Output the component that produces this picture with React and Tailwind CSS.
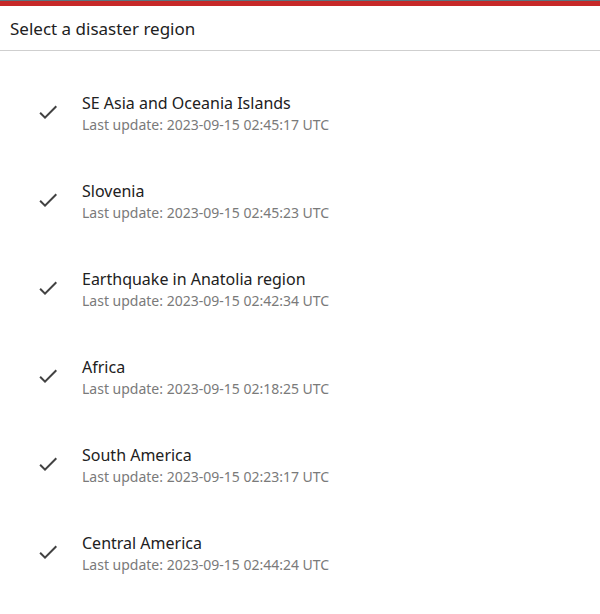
const regions = [
  { name: 'SE Asia and Oceania Islands', updated: '2023-09-15 02:45:17 UTC' },
  { name: 'Slovenia', updated: '2023-09-15 02:45:23 UTC' },
  { name: 'Earthquake in Anatolia region', updated: '2023-09-15 02:42:34 UTC' },
  { name: 'Africa', updated: '2023-09-15 02:18:25 UTC' },
  { name: 'South America', updated: '2023-09-15 02:23:17 UTC' },
  { name: 'Central America', updated: '2023-09-15 02:44:24 UTC' },
]

function CheckIcon() {
  return (
    <svg width="24" height="24" viewBox="0 0 24 24" className="fill-[#424242] shrink-0 mb-[4px]">
      <path d="M9 16.17L4.83 12l-1.42 1.41L9 19 21 7l-1.41-1.41z" />
    </svg>
  )
}

export default function App() {
  return (
    <div className="w-[600px] h-[614px] bg-white overflow-hidden font-['Noto_Sans',sans-serif]">
      <div className="h-px bg-[#5b7680]" />
      <div className="h-[5px] bg-[#c62828]" />
      <div className="h-[45px] flex items-center px-[10px] pt-px border-b border-[#cfcfcf] text-[17px] text-[#212121]">
        Select a disaster region
      </div>
      <ul className="pt-[19px]">
        {regions.map((r) => (
          <li key={r.name} className="h-[88px] flex items-center pl-[36px]">
            <CheckIcon />
            <div className="ml-[22px] flex flex-col">
              <span className="text-[16px] leading-[22px] text-[#212121]">{r.name}</span>
              <span className="text-[14px] leading-[22px] text-[#7a7a7a]">Last update: {r.updated}</span>
            </div>
          </li>
        ))}
      </ul>
    </div>
  )
}
